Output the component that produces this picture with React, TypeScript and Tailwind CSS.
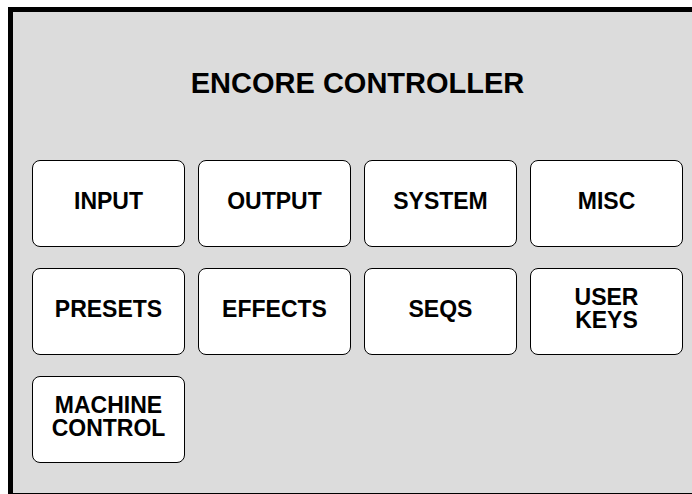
const buttons: string[][] = [
  ['INPUT'],
  ['OUTPUT'],
  ['SYSTEM'],
  ['MISC'],
  ['PRESETS'],
  ['EFFECTS'],
  ['SEQS'],
  ['USER', 'KEYS'],
  ['MACHINE', 'CONTROL'],
];

export default function App() {
  return (
    <div
      className="w-[692px] h-[494px] overflow-hidden bg-white"
      style={{ fontFamily: '"Liberation Sans", Arial, sans-serif' }}
    >
      <div className="ml-[8px] mt-[7px] w-[699px] h-[491px] border-[5px] border-black bg-[#dcdcdc]">
        <div className="pt-[57px] px-[19px]">
          <h1 className="text-center text-[29px] leading-[28px] font-bold text-black">
            ENCORE CONTROLLER
          </h1>
          <div className="mt-[63px] grid grid-cols-[repeat(4,153px)] auto-rows-[87px] gap-x-[13px] gap-y-[21px]">
            {buttons.map((lines) => (
              <button
                key={lines.join(' ')}
                className="flex flex-col items-center justify-center pb-[5px] rounded-[8px] border-[1.5px] border-black bg-white text-[23px] leading-[23px] font-bold text-black"
              >
                {lines.map((l) => (
                  <span key={l}>{l}</span>
                ))}
              </button>
            ))}
          </div>
        </div>
      </div>
    </div>
  );
}
